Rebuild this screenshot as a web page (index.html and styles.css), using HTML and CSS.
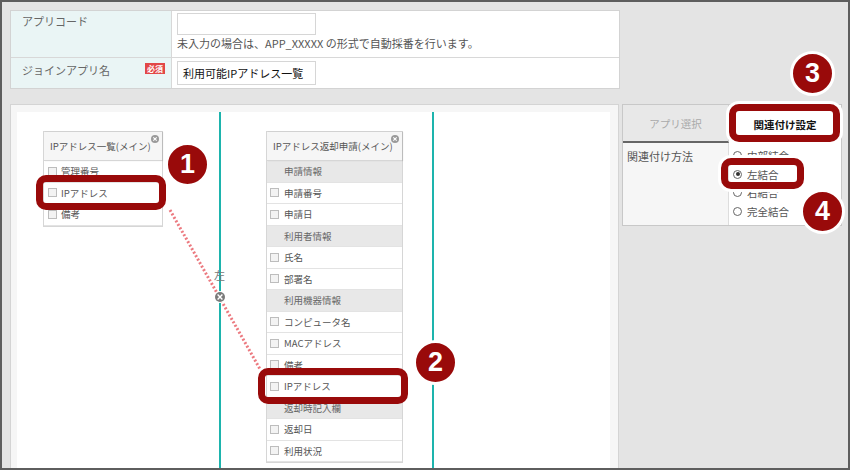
FILE: index.html
```html
<!DOCTYPE html>
<html lang="ja">
<head>
<meta charset="utf-8">
<title>ジョインアプリ設定</title>
<link rel="stylesheet" href="styles.css">
</head>
<body>
<div class="frame">
  <div class="form">
    <div class="frow r1">
      <div class="flabel"><span>アプリコード</span></div>
      <div class="fvalue">
        <div class="input"></div>
        <div class="hint">未入力の場合は、APP_XXXXX の形式で自動採番を行います。</div>
      </div>
    </div>
    <div class="frow r2">
      <div class="flabel"><span>ジョインアプリ名</span><span class="req">必須</span></div>
      <div class="fvalue"><div class="input">利用可能IPアドレス一覧</div></div>
    </div>
  </div>

  <div class="work">
    <div class="canvas-wrap">
      <div class="canvas">
        <div class="vline vl1"></div>
        <div class="vline vl2"></div>
        <svg class="links" width="593" height="360" viewBox="0 0 593 360">
          <line x1="153" y1="98" x2="243" y2="257" stroke="#ec7a80" stroke-width="3" stroke-dasharray="2 2"/>
          <circle cx="203" cy="185" r="6" fill="#fff"/>
          <circle cx="203" cy="185" r="5" fill="#7a7a7a"/>
          <path d="M200.6 182.6 L205.4 187.4 M205.4 182.6 L200.6 187.4" stroke="#fff" stroke-width="1.4"/>
        </svg>
        <div class="jlabel">左</div>

        <div class="tbl tbl-a">
          <div class="thead">IPアドレス一覧(メイン)
            <svg class="close" width="8" height="8" viewBox="0 0 8 8"><circle cx="4" cy="4" r="4" fill="#9a9a9a"/><path d="M2.3 2.3 L5.7 5.7 M5.7 2.3 L2.3 5.7" stroke="#fff" stroke-width="1.1"/></svg>
          </div>
          <div class="row"><span class="cb"></span>管理番号</div>
          <div class="row"><span class="cb"></span>IPアドレス</div>
          <div class="row"><span class="cb"></span>備考</div>
        </div>

        <div class="tbl tbl-b">
          <div class="thead">IPアドレス返却申請(メイン)
            <svg class="close" width="8" height="8" viewBox="0 0 8 8"><circle cx="4" cy="4" r="4" fill="#9a9a9a"/><path d="M2.3 2.3 L5.7 5.7 M5.7 2.3 L2.3 5.7" stroke="#fff" stroke-width="1.1"/></svg>
          </div>
          <div class="row sec">申請情報</div>
          <div class="row"><span class="cb"></span>申請番号</div>
          <div class="row"><span class="cb"></span>申請日</div>
          <div class="row sec">利用者情報</div>
          <div class="row"><span class="cb"></span>氏名</div>
          <div class="row"><span class="cb"></span>部署名</div>
          <div class="row sec">利用機器情報</div>
          <div class="row"><span class="cb"></span>コンピュータ名</div>
          <div class="row"><span class="cb"></span>MACアドレス</div>
          <div class="row"><span class="cb"></span>備考</div>
          <div class="row"><span class="cb"></span>IPアドレス</div>
          <div class="row sec">返却時記入欄</div>
          <div class="row"><span class="cb"></span>返却日</div>
          <div class="row"><span class="cb"></span>利用状況</div>
        </div>

        <div class="hl hl1"></div>
        <div class="hl hl2"></div>
        <div class="badge b1">1</div>
        <div class="badge b2">2</div>
      </div>
    </div>

    <div class="side">
      <div class="tabs">
        <div class="tab off">アプリ選択</div>
        <div class="tab on">関連付け設定</div>
      </div>
      <div class="setting">
        <div class="slabel">関連付け方法</div>
        <div class="radios">
          <div class="radio"><span class="rc"></span>内部結合</div>
          <div class="radio"><span class="rc sel"></span>左結合</div>
          <div class="radio"><span class="rc"></span>右結合</div>
          <div class="radio"><span class="rc"></span>完全結合</div>
        </div>
      </div>
      <div class="hl ring hl3"></div>
      <div class="hl ring hl4"></div>
      <div class="badge b3">3</div>
      <div class="badge b4">4</div>
    </div>
  </div>
</div>
</body>
</html>
```

FILE: styles.css
```css
* { box-sizing: border-box; }
body { margin: 0; font-family: "Noto Sans CJK JP", "Noto Sans", sans-serif; }

.frame {
  width: 850px; height: 470px;
  border: 2px solid #5e5e5e;
  background: #e4e4e4;
  padding: 8px 0 0 8px;
  overflow: hidden;
}

/* form */
.form { width: 610px; background: #fff; border: 1px solid #d3d3d3; }
.frow { display: grid; grid-template-columns: 161px 1fr; }
.r1 { height: 47px; border-bottom: 1px solid #d8d8d8; }
.r2 { height: 30px; }
.flabel {
  background: #eaf5f5; border-right: 1px solid #d8d8d8;
  padding: 1px 6px 0 11px;
  font-size: 11px; line-height: 18px; color: #666;
  display: flex; justify-content: space-between; align-items: flex-start;
}
.r2 .flabel { padding-top: 3px; }
.req {
  background: #e24747; color: #fff; font-size: 8px; line-height: 11px;
  padding: 0 2px; margin-top: 2px; font-weight: bold;
}
.fvalue { padding: 2px 0 0 5px; }
.r2 .fvalue { padding-top: 3px; }
.input {
  width: 139px; height: 22px; border: 1px solid #d6d6d6; background: #fff;
  font-size: 11px; line-height: 22px; padding-left: 5px; color: #111;
}
.r2 .input { height: 24px; }
.hint { font-size: 11px; color: #555; line-height: 14px; margin-top: 1px; white-space: nowrap; }

/* work area */
.work { display: flex; gap: 3px; margin-top: 15px; align-items: flex-start; }
.canvas-wrap {
  width: 609px; height: 380px;
  border: 1px solid #d4d4d4; background: #f6f6f6;
  padding: 7px 8px 0 6px;
}
.canvas { position: relative; background: #fff; height: 100%; }

.vline { position: absolute; top: 0; bottom: 0; width: 2px; background: #1db4ad; }
.vl1 { left: 202px; }
.vl2 { left: 415px; }
.links { position: absolute; left: 0; top: 0; }
.jlabel { position: absolute; left: 197px; top: 156px; font-size: 11px; line-height: 14px; color: #777; }

.tbl { position: absolute; top: 19px; background: #fff; border: 1px solid #d6d6d6; }
.tbl-a { left: 26px; width: 120px; }
.tbl-b { left: 249px; width: 137px; }
.thead {
  position: relative; height: 29px;
  border-bottom: 1px solid #d6d6d6; background: #f6f6f6;
  box-shadow: 1px 0 1px rgba(0,0,0,0.12);
  font-size: 9.5px; color: #555; white-space: nowrap;
  display: flex; align-items: center; padding-left: 6px;
}
.close { position: absolute; right: 3px; top: 3px; }
.row {
  height: 21.5px; border-bottom: 1px solid #e3e3e3;
  display: flex; align-items: center; gap: 4px;
  font-size: 9.5px; color: #555; padding-left: 4px; white-space: nowrap;
}
.tbl-b .row { padding-left: 3px; gap: 5px; }
.tbl-b .row.sec { background: #e8e8e8; padding-left: 17px; color: #666; }
.cb { width: 9px; height: 9px; border: 1px solid #bdbdbd; background: #f3f3f3; flex: none; }

/* highlights & badges */
.hl { position: absolute; border: 7px solid #990a0a; border-radius: 10px; }
.hl.ring { box-shadow: 0 0 0 3px #fff; }
.hl1 { left: 19px; top: 63px; width: 130px; height: 35px; }
.hl2 { left: 241px; top: 256px; width: 150px; height: 36px; }
.hl3 { left: 106px; top: -1px; width: 111px; height: 38px; }
.hl4 { left: 98px; top: 53px; width: 83px; height: 31px; }

.badge {
  position: absolute; width: 45px; height: 45px; border-radius: 50%;
  background: #990a0a; border: 3px solid #fff; color: #fff;
  font: bold 27px/39px "Liberation Sans", Arial, sans-serif; text-align: center;
}
.b1 { left: 148px; top: 30px; }
.b2 { left: 396px; top: 228px; }
.b3 { left: 167px; top: -54px; }
.b4 { left: 177px; top: 84px; }

/* side panel */
.side { position: relative; width: 220px; border: 1px solid #c8c8c8; background: #fff; }
.tabs { display: grid; grid-template-columns: 106px 1fr; height: 38px; }
.tab { display: flex; align-items: center; justify-content: center; font-size: 10.5px; }
.tab.off { background: #e8e8e8; color: #aaa; border-bottom: 2px solid #666; border-right: 1px solid #d0d0d0; }
.tab.on { background: #fff; color: #111; font-weight: bold; }
.setting { display: grid; grid-template-columns: 106px 1fr; }
.slabel {
  background: #f6f6f6; border-right: 1px solid #ddd;
  font-size: 11px; color: #555; padding: 4px 0 0 4px; line-height: 18px;
}
.radios { padding: 3px 0 4px 4px; }
.radio { display: flex; align-items: center; gap: 5px; height: 18.7px; font-size: 10.5px; color: #555; }
.rc { position: relative; width: 9px; height: 9px; border: 1px solid #666; border-radius: 50%; background: #fff; flex: none; }
.rc.sel::after {
  content: ""; position: absolute; left: 1.5px; top: 1.5px;
  width: 4px; height: 4px; border-radius: 50%; background: #333;
}
```
